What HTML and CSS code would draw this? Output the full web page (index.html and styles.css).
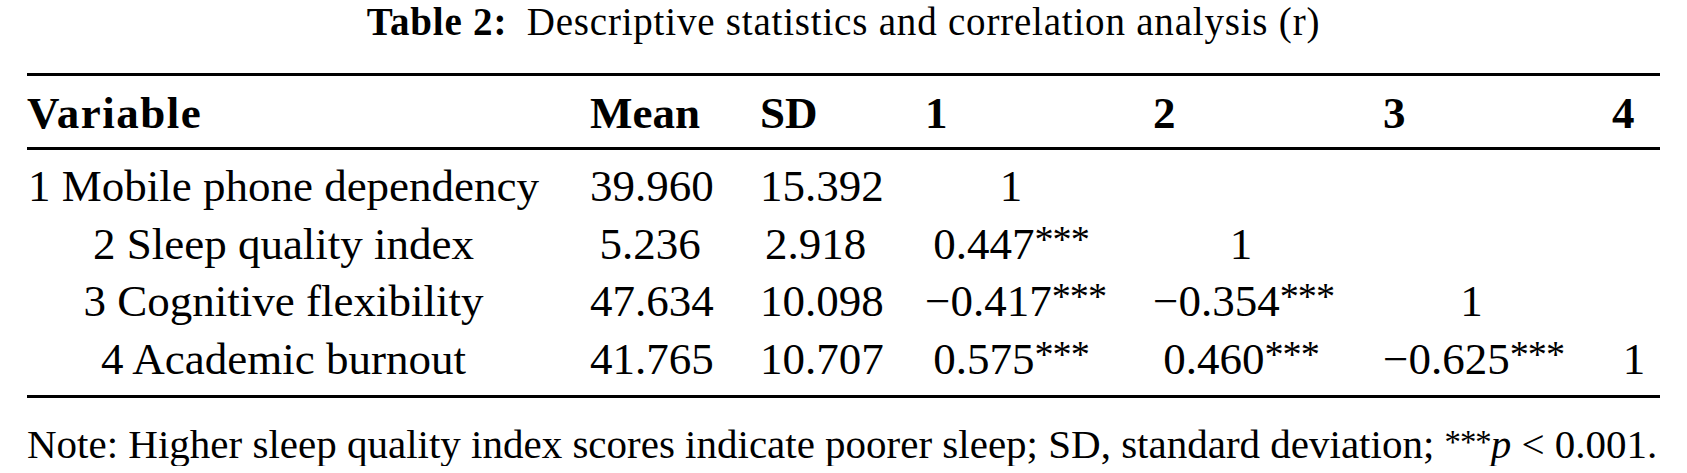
FILE: index.html
```html
<!DOCTYPE html>
<html lang="en">
<head>
<meta charset="utf-8">
<title>Table 2</title>
<link rel="stylesheet" href="styles.css">
</head>
<body>
<div class="page">
  <div class="caption"><span class="cap-label">Table 2:</span> Descriptive statistics and correlation analysis (r)</div>
  <div class="table">
    <div class="row head">
      <div>Variable</div><div>Mean</div><div>SD</div><div>1</div><div>2</div><div>3</div><div>4</div>
    </div>
    <div class="body">
      <div class="row">
        <div>1 Mobile phone dependency</div><div>39.960</div><div>15.392</div><div>1</div><div></div><div></div><div></div>
      </div>
      <div class="row">
        <div>2 Sleep quality index</div><div>5.236</div><div>2.918</div><div>0.447<span class="sig">***</span></div><div>1</div><div></div><div></div>
      </div>
      <div class="row">
        <div>3 Cognitive flexibility</div><div>47.634</div><div>10.098</div><div>−0.417<span class="sig">***</span></div><div>−0.354<span class="sig">***</span></div><div>1</div><div></div>
      </div>
      <div class="row">
        <div>4 Academic burnout</div><div>41.765</div><div>10.707</div><div>0.575<span class="sig">***</span></div><div>0.460<span class="sig">***</span></div><div>−0.625<span class="sig">***</span></div><div>1</div>
      </div>
    </div>
  </div>
  <div class="note">Note: Higher sleep quality index scores indicate poorer sleep; SD, standard deviation; <span class="sig">***</span><i>p</i> &lt; 0.001.</div>
</div>
</body>
</html>
```
FILE: styles.css
```css
body {
  margin: 0;
  background: #ffffff;
  color: #000000;
  font-family: "Liberation Serif", "Times New Roman", serif;
}

.page {
  width: 1633px;
  margin-left: 27px;
}

.caption {
  font-size: 39px;
  line-height: 43px;
  height: 43px;
  letter-spacing: 0.8px;
  text-align: center;
  white-space: nowrap;
}

.cap-label {
  font-weight: bold;
  margin-right: 9px;
}

.table {
  margin-top: 30px;
  border-top: 3px solid #000000;
  border-bottom: 3px solid #000000;
  font-size: 45px;
}

.row {
  display: grid;
  grid-template-columns: 538px 170px 163px 227px 231px 230px 74px;
  line-height: 57.5px;
  white-space: nowrap;
}

.row > * {
  text-align: center;
}

.head {
  padding-top: 9px;
  padding-bottom: 4.5px;
  border-bottom: 3px solid #000000;
  font-weight: bold;
}

.head > * {
  text-align: left;
}

.head > :nth-child(1) {
  letter-spacing: 1.5px;
}

.body {
  padding-top: 8px;
  padding-bottom: 7px;
}

.row > :nth-child(1) { padding: 0 25px 0 0; }
.row > :nth-child(2) { padding: 0 25px 0 25px; }
.row > :nth-child(3) { padding: 0 27px 0 25px; }
.row > :nth-child(4) { padding: 0 28px 0 27px; }
.row > :nth-child(5) { padding: 0 27px 0 28px; }
.row > :nth-child(6) { padding: 0 26px 0 27px; }
.row > :nth-child(7) { padding: 0 4px 0 26px; }

.sig {
  font-size: 0.85em;
  line-height: 1;
  vertical-align: 7px;
  letter-spacing: -1px;
}

.note {
  margin-top: 24px;
  font-size: 41px;
  line-height: 44px;
  white-space: nowrap;
}

.note .sig {
  font-size: 0.8em;
  vertical-align: 5px;
  letter-spacing: -1px;
}
```
